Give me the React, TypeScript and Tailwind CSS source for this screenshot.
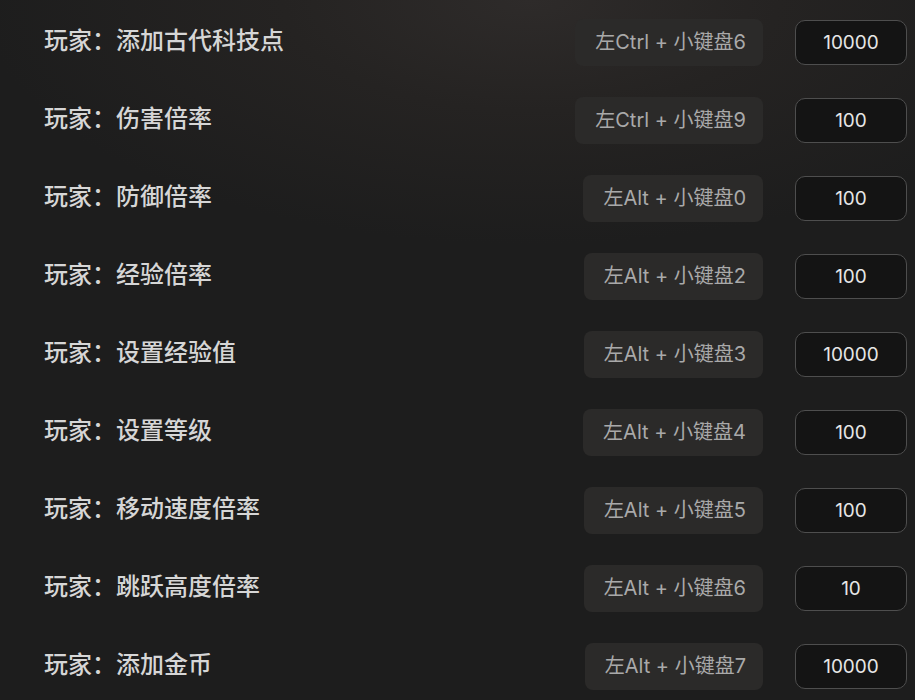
import React from "react";

const rows = [
  { label: "玩家：添加古代科技点", key: "左Ctrl + 小键盘6", value: "10000" },
  { label: "玩家：伤害倍率", key: "左Ctrl + 小键盘9", value: "100" },
  { label: "玩家：防御倍率", key: "左Alt + 小键盘0", value: "100" },
  { label: "玩家：经验倍率", key: "左Alt + 小键盘2", value: "100" },
  { label: "玩家：设置经验值", key: "左Alt + 小键盘3", value: "10000" },
  { label: "玩家：设置等级", key: "左Alt + 小键盘4", value: "100" },
  { label: "玩家：移动速度倍率", key: "左Alt + 小键盘5", value: "100" },
  { label: "玩家：跳跃高度倍率", key: "左Alt + 小键盘6", value: "10" },
  { label: "玩家：添加金币", key: "左Alt + 小键盘7", value: "10000" },
];

export default function App() {
  return (
    <div
      className="w-[915px] h-[700px] overflow-hidden bg-[#1d1d1d] bg-[radial-gradient(ellipse_60%_35%_at_58%_0%,#2e2b2a_0%,#252322_45%,#1d1d1d_100%)] pt-[3px]"
      style={{ fontFamily: 'Inter, "Noto Sans CJK SC", sans-serif' }}
    >
      {rows.map((r) => (
        <div key={r.label} className="flex items-center h-[78px] pr-[8px]">
          <div className="flex-1 pl-[44px] pb-[2px] text-[24px] font-medium text-[#d6d6d6]">
            {r.label}
          </div>
          <div className="h-[47px] flex items-center pl-[20px] pr-[17px] rounded-[8px] bg-[#2b2a29] text-[20px] text-[#a9a9a9]">
            {r.key}
          </div>
          <div className="ml-[32px] w-[112px] h-[45px] flex items-center justify-center pt-[2px] rounded-[10px] border-[1.5px] border-[#4e4e4e] bg-[#141414] text-[19px] text-[#e6e6e6]">
            {r.value}
          </div>
        </div>
      ))}
    </div>
  );
}
